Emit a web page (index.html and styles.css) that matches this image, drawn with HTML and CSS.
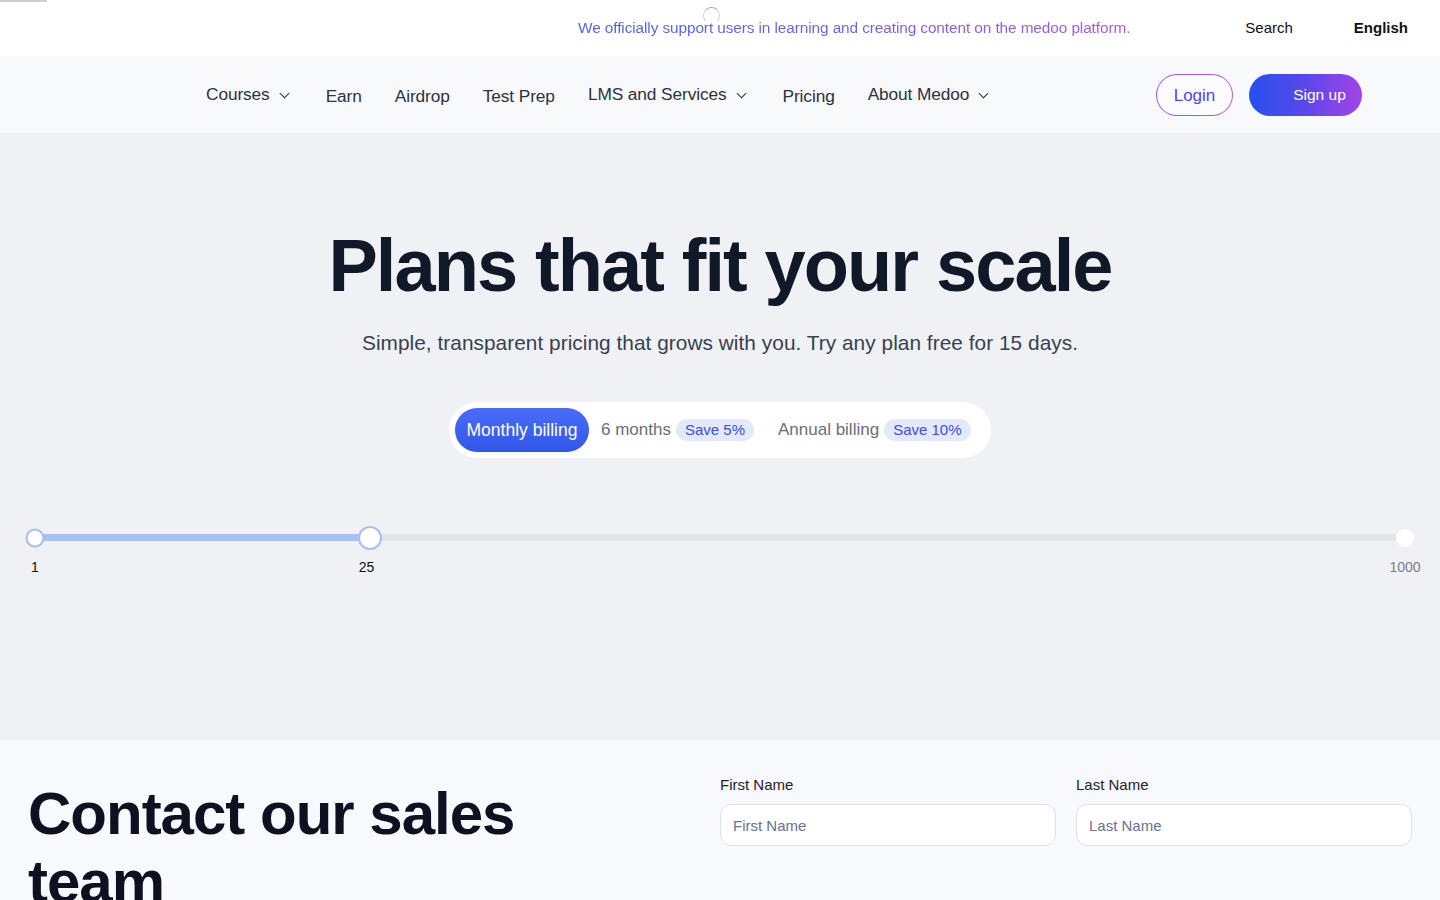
FILE: index.html
```html
<!DOCTYPE html>
<html lang="en">
<head>
    <meta charset="UTF-8">
    <title>Pricing - Medoo</title>
    <link rel="stylesheet" href="styles.css">
</head>
<body>
    <div class="progress-line"></div>

    <div class="topbar">
        <div class="announce">
            <span class="spinner"></span>
            <span class="announce-text">We officially support users in learning and creating content on the medoo platform.</span>
        </div>
        <div class="topbar-right">
            <a class="top-link">Search</a>
            <a class="top-link lang">English</a>
        </div>
    </div>

    <nav class="navbar">
        <ul class="menu">
            <li class="menu-item">Courses <span class="chev"></span></li>
            <li class="menu-item">Earn</li>
            <li class="menu-item">Airdrop</li>
            <li class="menu-item">Test Prep</li>
            <li class="menu-item">LMS and Services <span class="chev"></span></li>
            <li class="menu-item">Pricing</li>
            <li class="menu-item">About Medoo <span class="chev"></span></li>
        </ul>
        <div class="auth">
            <a class="btn-login"><span>Login</span></a>
            <a class="btn-signup">Sign up</a>
        </div>
    </nav>

    <section class="hero">
        <h1 class="hero-title">Plans that fit your scale</h1>
        <p class="hero-sub">Simple, transparent pricing that grows with you. Try any plan free for 15 days.</p>

        <div class="billing">
            <button class="billing-opt active">Monthly billing</button>
            <button class="billing-opt">6 months <span class="save">Save 5%</span></button>
            <button class="billing-opt">Annual billing <span class="save">Save 10%</span></button>
        </div>

        <div class="slider">
            <div class="track">
                <div class="track-fill" style="width: 24.45%"></div>
                <span class="dot dot-start"></span>
                <span class="dot dot-handle" style="left: 24.45%"></span>
                <span class="dot dot-end"></span>
            </div>
            <div class="marks">
                <span class="mark" style="left: 0%">1</span>
                <span class="mark" style="left: 24.2%">25</span>
                <span class="mark mark-end" style="left: 100%">1000</span>
            </div>
        </div>
    </section>

    <section class="contact">
        <h2 class="contact-title">Contact our sales team</h2>
        <form class="contact-form">
            <div class="field">
                <label>First Name</label>
                <input type="text" placeholder="First Name">
            </div>
            <div class="field">
                <label>Last Name</label>
                <input type="text" placeholder="Last Name">
            </div>
            <div class="field wide">
                <label>Email</label>
                <input type="text">
            </div>
        </form>
    </section>
</body>
</html>
```

FILE: styles.css
```css
* {
    box-sizing: border-box;
}
body {
    margin: 0;
    font-family: "Liberation Sans", Arial, sans-serif;
    color: #111827;
    background: #f8f9fc;
}
a {
    cursor: pointer;
}
.progress-line {
    position: absolute;
    top: 0;
    left: 0;
    width: 47px;
    height: 2px;
    background: #cfcfd3;
}

/* top announcement bar */
.topbar {
    height: 56px;
    background: #ffffff;
    display: flex;
    align-items: center;
    padding-left: 578px;
    padding-right: 32px;
}
.announce {
    position: relative;
    font-size: 15.4px;
    letter-spacing: -0.1px;
    padding-bottom: 1px;
}
.announce-text {
    background: linear-gradient(90deg, #4a63ea 0%, #7d5ee6 60%, #a35be0 100%);
    -webkit-background-clip: text;
    background-clip: text;
    color: transparent;
}
.spinner {
    position: absolute;
    left: 125px;
    top: -12px;
    width: 17px;
    height: 17px;
    border-radius: 50%;
    border: 1.5px solid transparent;
    border-top-color: #a8a8ae;
    border-left-color: #d0d0d4;
    border-right-color: #d0d0d4;
}
.topbar-right {
    margin-left: auto;
    display: flex;
    gap: 61px;
    font-size: 15px;
    color: #111;
    padding-bottom: 1px;
}
.top-link.lang {
    font-weight: bold;
}

/* main navigation */
.navbar {
    height: 77px;
    background: #f8f9fb;
    display: flex;
    align-items: center;
    padding: 0 78px 0 206px;
}
.menu {
    list-style: none;
    margin: 0;
    padding: 0;
    display: flex;
    align-items: center;
    gap: 33px;
    font-size: 17.3px;
    color: #2d3142;
    letter-spacing: -0.1px;
}
.menu-item {
    display: flex;
    align-items: center;
    gap: 9px;
}
.menu-item:nth-child(2),
.menu-item:nth-child(3),
.menu-item:nth-child(4),
.menu-item:nth-child(6) {
    padding-top: 3px;
}
.chev {
    width: 7px;
    height: 7px;
    border-right: 1.8px solid #2d3142;
    border-bottom: 1.8px solid #2d3142;
    transform: rotate(45deg);
    margin: -3px 5px 0 2px;
}
.auth {
    margin-left: auto;
    display: flex;
    gap: 16px;
}
.btn-login {
    height: 42px;
    width: 77px;
    border-radius: 21px;
    padding: 1px;
    background: linear-gradient(90deg, #8b5cf6, #b15ae8);
    display: flex;
}
.btn-login span {
    flex: 1;
    border-radius: 20px;
    background: #fbfbfd;
    display: flex;
    align-items: center;
    justify-content: center;
    font-size: 17px;
    color: #4f46e5;
    padding-top: 2px;
}
.btn-signup {
    height: 42px;
    width: 113px;
    border-radius: 21px;
    background: linear-gradient(90deg, #2451ee 0%, #5b47ea 50%, #a244e6 100%);
    color: #fff;
    font-size: 15.5px;
    display: flex;
    align-items: center;
    justify-content: center;
    padding-left: 28px;
}

/* hero with billing toggle */
.hero {
    background: #eff1f5;
    height: 607px;
    padding-top: 93px;
    text-align: center;
}
.hero-title {
    margin: 0;
    font-size: 74px;
    font-weight: bold;
    letter-spacing: -1.9px;
    color: #111827;
    line-height: 80px;
}
.hero-sub {
    margin: 25px 0 0;
    font-size: 20.8px;
    color: #374151;
    letter-spacing: 0.05px;
}
.billing {
    display: inline-flex;
    align-items: center;
    margin-top: 47px;
    padding: 6px;
    gap: 12px;
    background: #ffffff;
    border-radius: 28px;
    height: 56px;
    width: 542px;
}
.billing-opt {
    border: 0;
    background: none;
    font-family: inherit;
    font-size: 17px;
    color: #6b6e78;
    display: flex;
    align-items: center;
    gap: 5px;
    padding: 0;
    height: 44px;
    white-space: nowrap;
}
.billing-opt + .billing-opt + .billing-opt {
    margin-left: 12px;
}
.billing-opt.active {
    background: linear-gradient(180deg, #4a6cf7, #3157ea);
    color: #fff;
    font-size: 17.5px;
    border-radius: 22px;
    padding: 0;
    width: 134px;
    justify-content: center;
}
.save {
    background: #e3e8fb;
    color: #3b4fd8;
    font-size: 15px;
    border-radius: 12px;
    padding: 2px 9px 3px;
}

/* seat slider */
.slider {
    margin: 76px 35px 0 35px;
}
.track {
    position: relative;
    height: 7px;
    border-radius: 4px;
    background: #e3e4e9;
}
.track-fill {
    height: 100%;
    border-radius: 4px;
    background: #a5c1f9;
}
.dot {
    position: absolute;
    top: 50%;
    border-radius: 50%;
    background: #fff;
    transform: translate(-50%, -50%);
}
.dot-start {
    left: 0;
    width: 19px;
    height: 19px;
    border: 2px solid #a9bdf2;
}
.dot-handle {
    width: 24px;
    height: 24px;
    border: 2px solid #a9bdf2;
}
.dot-end {
    left: 100%;
    width: 18px;
    height: 18px;
}
.marks {
    position: relative;
    height: 20px;
    margin-top: 18px;
    font-size: 14px;
    color: #111;
}
.mark {
    position: absolute;
    transform: translateX(-50%);
}
.mark-end {
    color: #7b7d85;
}

/* contact form */
.contact {
    background: #f8f9fc;
    display: flex;
    padding: 36px 28px 0;
    min-height: 300px;
}
.contact-title {
    margin: 0;
    width: 692px;
    font-size: 60px;
    font-weight: bold;
    line-height: 68px;
    letter-spacing: -1px;
    color: #0f1120;
    padding-top: 4px;
    padding-right: 160px;
}
.contact-form {
    flex: 1;
    display: grid;
    grid-template-columns: 1fr 1fr;
    column-gap: 20px;
    row-gap: 32px;
}
.field {
    display: flex;
    flex-direction: column;
    gap: 11px;
}
.field.wide {
    grid-column: 1 / 3;
}
.field label {
    font-size: 15px;
    color: #1f2130;
    font-weight: 500;
}
.field input {
    height: 42px;
    border: 1px solid #dfe1e8;
    border-radius: 11px;
    background: #fff;
    padding: 0 12px;
    font-family: inherit;
    font-size: 15px;
    color: #111;
}
.field input::placeholder {
    color: #6b7190;
}
```
